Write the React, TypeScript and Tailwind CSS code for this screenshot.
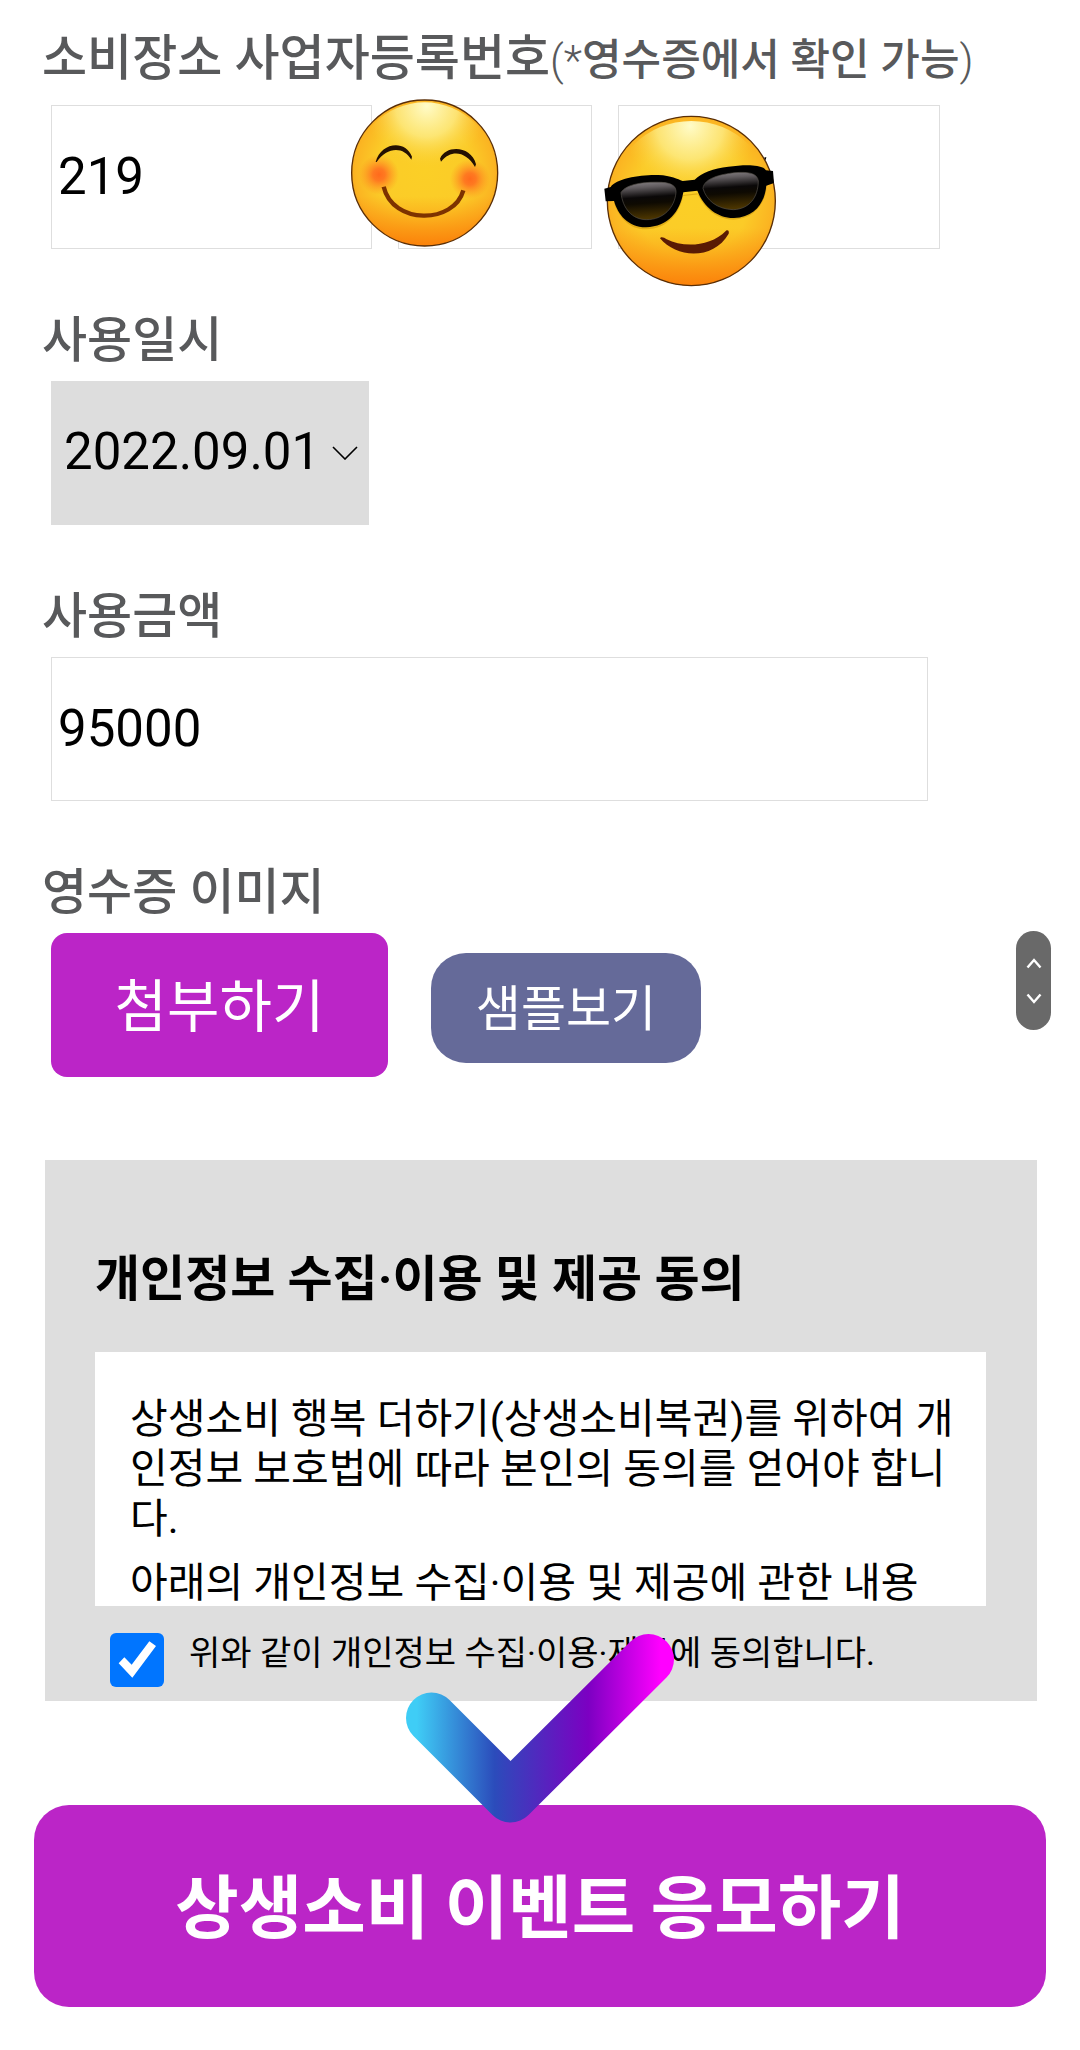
/**
 * Receipt entry form for the win-win spending lottery event: business number, date, amount,
 * receipt image, privacy consent and the submit button, with a few stickers on top.
 */
import { useState, type ReactNode } from 'react';

const consentText = [
  '상생소비 행복 더하기(상생소비복권)를 위하여 개인정보 보호법에 따라 본인의 동의를 얻어야 합니다.',
  '아래의 개인정보 수집·이용 및 제공에 관한 내용',
];

const buttonFont = "pb-[6px] font-['Noto_Sans_CJK_KR',sans-serif] text-white";

const boxClass =
  'h-36 w-full min-w-0 border border-[#dedede] bg-white pb-[2px] pl-[6px] text-[51px] text-black outline-none';

function SmileSticker({ className }: { className: string }) {
  return (
    <svg viewBox="30 21 450 450" className={className} aria-hidden="true">
      <defs>
        <radialGradient id="smileFace" gradientUnits="userSpaceOnUse" cx="254" cy="240" r="245">
          <stop offset="0" stopColor="#fbcf26" />
          <stop offset="0.6" stopColor="#fbcb28" />
          <stop offset="0.85" stopColor="#fbb522" />
          <stop offset="1" stopColor="#f59c1a" />
        </radialGradient>
        <linearGradient id="smileBase" x1="0" y1="0" x2="0" y2="1">
          <stop offset="0.66" stopColor="#fb8a0c" stopOpacity="0" />
          <stop offset="1" stopColor="#fb7d08" stopOpacity="0.9" />
        </linearGradient>
        <radialGradient id="smileShine" gradientUnits="userSpaceOnUse" cx="260" cy="45" r="185">
          <stop offset="0" stopColor="#fffcc8" />
          <stop offset="0.5" stopColor="#fdea80" stopOpacity="0.85" />
          <stop offset="1" stopColor="#fbd030" stopOpacity="0" />
        </radialGradient>
        <radialGradient id="smileCheek">
          <stop offset="0" stopColor="#ff6a1c" />
          <stop offset="0.3" stopColor="#ff7020" stopOpacity="0.9" />
          <stop offset="1" stopColor="#ff9020" stopOpacity="0" />
        </radialGradient>
      </defs>
      <circle cx="254" cy="246" r="219" fill="url(#smileFace)" />
      <circle cx="254" cy="246" r="219" fill="url(#smileBase)" />
      <circle cx="254" cy="246" r="212" fill="url(#smileShine)" />
      <circle cx="254" cy="246" r="219" fill="none" stroke="#5a2e06" strokeWidth="4" />
      <circle cx="117" cy="251" r="60" fill="url(#smileCheek)" />
      <circle cx="390" cy="264" r="60" fill="url(#smileCheek)" />
      <path d="M107 213C122 154 196 144 216 197L214 206C190 164 140 168 110 213Z" fill="#241002" />
      <path d="M300 203C318 161 394 164 408 220L405 228C378 182 335 174 303 212Z" fill="#241002" />
      <path d="M131 287C158 402 342 400 370 298" fill="none" stroke="#7d3200" strokeWidth="13" />
    </svg>
  );
}

function SunglassesSticker({ className }: { className: string }) {
  return (
    <svg viewBox="792 66 519 525" className={className} aria-hidden="true">
      <defs>
        <radialGradient id="coolFace" gradientUnits="userSpaceOnUse" cx="1054" cy="325" r="285">
          <stop offset="0" stopColor="#fbcf26" />
          <stop offset="0.6" stopColor="#fbcb28" />
          <stop offset="0.85" stopColor="#fbb522" />
          <stop offset="1" stopColor="#f59c1a" />
        </radialGradient>
        <linearGradient id="coolBase" x1="0" y1="0" x2="0" y2="1">
          <stop offset="0.66" stopColor="#fb8a0c" stopOpacity="0" />
          <stop offset="1" stopColor="#fb7d08" stopOpacity="0.9" />
        </linearGradient>
        <radialGradient id="coolShine" gradientUnits="userSpaceOnUse" cx="1050" cy="105" r="200">
          <stop offset="0" stopColor="#fffcc8" />
          <stop offset="0.5" stopColor="#fdea80" stopOpacity="0.85" />
          <stop offset="1" stopColor="#fbd030" stopOpacity="0" />
        </radialGradient>
        <linearGradient id="coolLens" x1="0" y1="0" x2="0.1" y2="1">
          <stop offset="0" stopColor="#8a8588" />
          <stop offset="0.18" stopColor="#5f5a5d" />
          <stop offset="0.44" stopColor="#0a0808" />
          <stop offset="0.6" stopColor="#0e0a02" />
          <stop offset="1" stopColor="#4a3400" />
        </linearGradient>
      </defs>
      <ellipse cx="1054" cy="330" rx="252" ry="254" fill="url(#coolFace)" />
      <ellipse cx="1054" cy="330" rx="252" ry="254" fill="url(#coolBase)" />
      <ellipse cx="1054" cy="330" rx="244" ry="240" fill="url(#coolShine)" />
      <ellipse cx="1054" cy="330" rx="252" ry="254" fill="none" stroke="#5a2e06" strokeWidth="4" />
      {/* shadow under the frame */}
      <path
        d="M822 335C835 375 865 415 918 415C985 413 1020 365 1030 312L1072 307C1098 365 1140 385 1180 386C1240 384 1274 342 1280 290Z"
        fill="#b98200"
        opacity="0.4"
      />
      <path
        d="M793 293L812 288C828 262 905 250 955 252C995 254 1012 264 1028 270L1064 266C1085 245 1120 232 1165 227C1210 221 1265 218 1278 238L1299 240L1302 276L1279 284C1274 335 1245 379 1182 381C1135 382 1092 350 1072 299L1030 304C1020 362 985 407 918 409C862 408 834 370 822 330L797 331Z"
        fill="#000"
      />
      <path d="M1272 200L1279 198L1277 208Z" fill="#000" />
      <path
        d="M843 305C858 278 915 272 965 274C995 276 1009 285 1008 304C1004 350 970 386 920 386C876 386 848 352 843 305Z"
        fill="url(#coolLens)"
        stroke="#55504a"
        strokeWidth="2"
      />
      <path
        d="M1089 292C1092 262 1140 250 1185 245C1225 242 1252 246 1255 270C1254 320 1228 354 1180 356C1130 355 1098 326 1089 292Z"
        fill="url(#coolLens)"
        stroke="#55504a"
        strokeWidth="2"
      />
      <path
        d="M960 442C962 436 972 438 980 445C1030 470 1110 468 1158 419C1164 415 1168 420 1166 428C1120 508 1010 502 960 442Z"
        fill="#5a1a04"
      />
    </svg>
  );
}

function CheckSticker({ className }: { className: string }) {
  return (
    <svg viewBox="0 0 268 189" className={className} aria-hidden="true">
      <defs>
        <linearGradient id="checkColor" gradientUnits="userSpaceOnUse" x1="0" y1="0" x2="268" y2="0">
          <stop offset="0.04" stopColor="#3fcdf6" />
          <stop offset="0.33" stopColor="#2b4cbb" />
          <stop offset="0.68" stopColor="#7c00c2" />
          <stop offset="0.95" stopColor="#ff00ff" />
        </linearGradient>
      </defs>
      <path
        d="M25.5 84L104.5 163L242.5 25.5"
        fill="none"
        stroke="url(#checkColor)"
        strokeWidth="51"
        strokeLinecap="round"
        strokeLinejoin="round"
      />
    </svg>
  );
}

function Field({ label, htmlFor, children }: { label: string; htmlFor: string; children: ReactNode }) {
  return (
    <div>
      <label htmlFor={htmlFor} className="block text-[49px] leading-[64px] font-medium text-[#58595b]">
        {label}
      </label>
      <div className="mt-2 ml-[9px]">{children}</div>
    </div>
  );
}

export default function App() {
  const [bizNo, setBizNo] = useState(['219', '', '']);
  const [amount, setAmount] = useState('95000');
  const [agreed, setAgreed] = useState(true);

  return (
    <main className="relative bg-white pt-[27px] pb-11 font-[Roboto,'Noto_Sans_CJK_KR',sans-serif]">
      <form onSubmit={(e) => e.preventDefault()}>
        <div className="flex flex-col gap-[60px] px-[42px]">
          {/* Business number */}
          <div>
            <label htmlFor="biz-0" className="block text-[49px] leading-[64px] font-medium text-[#58595b]">
              소비장소 사업자등록번호
              <span className="text-[43px] leading-none">
                <span className="font-light">(*</span>영수증에서 확인 가능<span className="font-light">)</span>
              </span>
            </label>
            <div className="relative mt-[14px] ml-[9px] grid max-w-[889px] grid-cols-[321fr_194fr_322fr] gap-[26px]">
              {bizNo.map((value, i) => (
                <input
                  key={i}
                  id={`biz-${i}`}
                  aria-label={`사업자등록번호 ${i + 1}`}
                  value={value}
                  onChange={(e) => setBizNo((prev) => prev.map((v, j) => (j === i ? e.target.value : v)))}
                  className={boxClass}
                />
              ))}
              <SmileSticker className="absolute top-[-7px] left-[299px] size-[150px]" />
              <SunglassesSticker className="absolute top-[8px] left-[553px] h-[175px] w-[173px]" />
            </div>
          </div>

          <Field label="사용일시" htmlFor="used-at">
            <div className="relative w-[318px]">
              <select
                id="used-at"
                defaultValue="2022.09.01"
                className="h-36 w-full appearance-none bg-[#dddddd] pb-[2px] pl-[13px] text-[51px] text-black outline-none"
              >
                <option>2022.09.01</option>
                <option>2022.09.02</option>
              </select>
              <svg
                viewBox="0 0 26 14"
                className="pointer-events-none absolute top-[65px] right-[11px] h-[14px] w-[26px]"
                aria-hidden="true"
              >
                <path d="M1 1L13 13L25 1" fill="none" stroke="#000" strokeWidth="1.6" />
              </svg>
            </div>
          </Field>

          <Field label="사용금액" htmlFor="amount">
            <div className="max-w-[877px]">
              <input id="amount" value={amount} onChange={(e) => setAmount(e.target.value)} className={boxClass} />
            </div>
          </Field>

          <Field label="영수증 이미지" htmlFor="attach">
            <div className="flex items-center gap-[43px]">
              <button
                id="attach"
                type="button"
                className={`h-36 w-[337px] rounded-2xl bg-[#bb25c7] text-[57px] leading-[72px] ${buttonFont}`}
              >
                첨부하기
              </button>
              <button
                type="button"
                className={`mt-[6px] h-[110px] w-[270px] rounded-[35px] bg-[#656a99] text-[49px] leading-[64px] ${buttonFont}`}
              >
                샘플보기
              </button>
            </div>
          </Field>
        </div>

        {/* Privacy consent */}
        <section className="mt-[83px] mr-[43px] ml-[45px] bg-[#dedede] pt-[88px] pr-[51px] pb-[14px] pl-[50px] text-black">
          <h2 className="text-[49px] leading-[64px] font-bold">개인정보 수집·이용 및 제공 동의</h2>
          <div className="mt-10 flex h-[254px] flex-col gap-[14px] overflow-hidden bg-white pt-[42px] pr-[30px] pl-[35px] text-[41px] leading-[50px]">
            {consentText.map((text) => (
              <p key={text}>{text}</p>
            ))}
          </div>
          <div className="mt-[27px] ml-[15px] flex items-start gap-[25px]">
            <span className="relative size-[54px] shrink-0">
              <input
                id="agree"
                type="checkbox"
                checked={agreed}
                onChange={(e) => setAgreed(e.target.checked)}
                className="block size-[54px] appearance-none rounded-md border-2 border-[#767676] bg-white checked:border-0 checked:bg-[#0075ff]"
              />
              {agreed && (
                <svg viewBox="0 0 162 162" className="pointer-events-none absolute inset-0" aria-hidden="true">
                  <path d="M26 91L43 73L65 95L118 25L138 39L67 134Z" fill="#fff" />
                </svg>
              )}
            </span>
            <label htmlFor="agree" className="text-[34px] leading-[40px]">
              위와 같이 개인정보 수집·이용·제공에 동의합니다.
            </label>
          </div>
        </section>

        <div className="relative mx-[34px] pt-[104px]">
          <button
            type="submit"
            className={`h-[202px] w-full rounded-[35px] bg-[#bb25c7] text-[69px] leading-[88px] font-bold ${buttonFont}`}
          >
            상생소비 이벤트 응모하기
          </button>
          <CheckSticker className="absolute top-[-67px] left-[372px] h-[189px] w-[268px]" />
        </div>
      </form>

      {/* Quick scroll */}
      <div className="absolute top-[931px] right-[29px] flex h-[99px] w-[35px] flex-col items-center justify-center gap-[24px] rounded-full bg-[#696969]">
        <button type="button" aria-label="위로">
          <svg viewBox="0 0 16 11" className="block h-[11px] w-4">
            <path d="M1.5 9.5L8 2L14.5 9.5" fill="none" stroke="#fff" strokeWidth="2.4" />
          </svg>
        </button>
        <button type="button" aria-label="아래로">
          <svg viewBox="0 0 16 11" className="block h-[11px] w-4">
            <path d="M1.5 1.5L8 9L14.5 1.5" fill="none" stroke="#fff" strokeWidth="2.4" />
          </svg>
        </button>
      </div>
    </main>
  );
}
